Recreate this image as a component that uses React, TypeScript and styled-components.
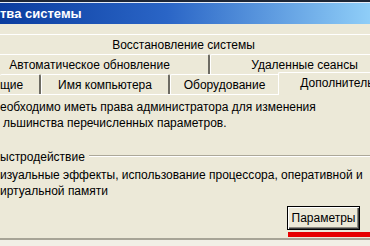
import React from 'react';
import styled, { createGlobalStyle } from 'styled-components';

const GlobalStyle = createGlobalStyle`
  html, body {
    margin: 0;
    padding: 0;
    background: #ece9d8;
  }
  body {
    font-family: "Liberation Sans", Arial, sans-serif;
  }
`;

const Window = styled.div`
  width: 370px;
  height: 246px;
  overflow: hidden;
  background: #ece9d8;
  display: flex;
  flex-direction: column;
  font-size: 12px;
  color: #000;
`;

const ScreenEdge = styled.div`
  flex: none;
  height: 2px;
  background: #1d2636;
  border-bottom: 1px solid #e4ecf8;
`;

const TitleBar = styled.div`
  flex: none;
  height: 21px;
  display: flex;
  align-items: center;
  background: linear-gradient(90deg, #0b3d9f 0%, #2a65c6 45%, #8fcef8 100%);
  color: #fff;
  font-weight: bold;
  font-size: 13px;
  white-space: nowrap;
`;

const Tabs = styled.div`
  flex: none;
  margin-top: 10px;
  display: flex;
  flex-direction: column;
`;

const TabRow = styled.div`
  display: flex;
  height: 20px;
  align-items: flex-end;
`;

const Tab = styled.div<{ $w: number; $offset?: number; $active?: boolean; $start?: boolean }>`
  flex: none;
  box-sizing: border-box;
  width: ${(p) => p.$w}px;
  margin-left: ${(p) => p.$offset ?? 0}px;
  height: ${(p) => (p.$active ? 23 : 20)}px;
  margin-bottom: ${(p) => (p.$active ? -1 : 0)}px;
  position: relative;
  z-index: ${(p) => (p.$active ? 1 : 0)};
  background: #ece9d8;
  border-top: 1px solid #fff;
  border-left: ${(p) => (p.$start ? 'none' : '1px solid #fff')};
  border-right: 2px solid #6d6b63;
  border-radius: 2px 2px 0 0;
  display: flex;
  align-items: center;
  justify-content: ${(p) => (p.$start ? 'flex-start' : 'center')};
  padding-bottom: ${(p) => (p.$active ? 3 : 0)}px;
  white-space: nowrap;
`;

const Panel = styled.div`
  flex: none;
  height: 146px;
  box-sizing: border-box;
  border-top: 1px solid #fff;
  border-bottom: 2px solid #a7a496;
  padding-top: 4px;
  display: flex;
  flex-direction: column;
`;

const Text = styled.p<{ $indent?: number }>`
  margin: 0;
  line-height: 16px;
  white-space: nowrap;
  padding-left: ${(p) => p.$indent ?? 0}px;
`;

const Group = styled.div`
  margin-top: 18px;
  display: flex;
  flex-direction: column;
`;

const Legend = styled.div`
  display: flex;
  align-items: center;
  height: 16px;
  gap: 4px;
  white-space: nowrap;
`;

const Rule = styled.div`
  flex: 1;
  border-top: 1px solid #aca899;
  border-bottom: 1px solid #fff;
  margin-top: -3px;
`;

const GroupBody = styled.div`
  margin-top: 2px;
`;

const Actions = styled.div`
  display: flex;
  flex-direction: column;
  align-items: flex-end;
  margin-top: 7px;
`;

const Button = styled.button`
  width: 73px;
  height: 24px;
  margin-right: 10px;
  padding: 0;
  background: #ece9d8;
  border: 1px solid #000;
  box-shadow: inset 1px 1px 0 #fff, inset -1px -1px 0 #404040, inset -2px -2px 0 #8e8c82;
  font-family: "Liberation Sans", Arial, sans-serif;
  font-size: 12px;
  color: #000;
`;

const Marker = styled.div`
  width: 82px;
  height: 5px;
  margin-top: 2px;
  background: #e60000;
`;

const Footer = styled.div`
  flex: 1;
  background: #f1efe6;
`;

export default function App() {
  return (
    <>
      <GlobalStyle />
      <Window>
        <ScreenEdge />
        <TitleBar>тва системы</TitleBar>
        <Tabs>
          <TabRow>
            <Tab $w={408} $offset={-20}>Восстановление системы</Tab>
          </TabRow>
          <TabRow>
            <Tab $w={240} $offset={-30}>Автоматическое обновление</Tab>
            <Tab $w={190}>Удаленные сеансы</Tab>
          </TabRow>
          <TabRow>
            <Tab $w={41} $start>щие</Tab>
            <Tab $w={129}>Имя компьютера</Tab>
            <Tab $w={110}>Оборудование</Tab>
            <Tab $w={132} $offset={-2} $active>Дополнительно</Tab>
          </TabRow>
        </Tabs>
        <Panel>
          <Text>еобходимо иметь права администратора для изменения</Text>
          <Text $indent={3}>льшинства перечисленных параметров.</Text>
          <Group>
            <Legend>
              <span>ыстродействие</span>
              <Rule />
            </Legend>
            <GroupBody>
              <Text>изуальные эффекты, использование процессора, оперативной и</Text>
              <Text>иртуальной памяти</Text>
            </GroupBody>
          </Group>
          <Actions>
            <Button>Параметры</Button>
            <Marker />
          </Actions>
        </Panel>
        <Footer />
      </Window>
    </>
  );
}
